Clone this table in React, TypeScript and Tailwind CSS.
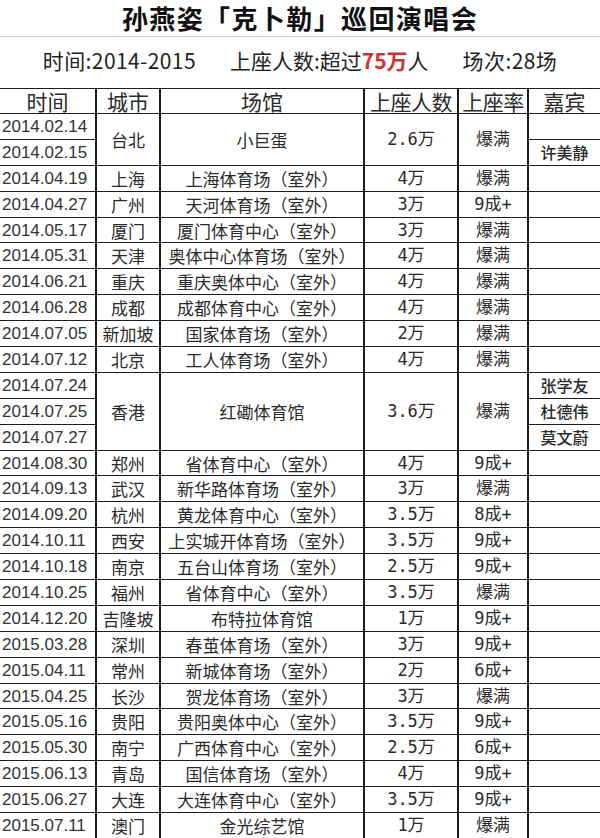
import React from "react";

type Row = {
  d: string;
  city?: string;
  venue?: string;
  num?: string;
  rate?: string;
  span?: number;
  guest?: string;
  guestOnly?: boolean;
};

const rows: Row[] = [
  { d: "2014.02.14", city: "台北", venue: "小巨蛋", num: "2.6万", rate: "爆满", span: 2, guest: "" },
  { d: "2014.02.15", guestOnly: true, guest: "许美静" },
  { d: "2014.04.19", city: "上海", venue: "上海体育场（室外）", num: "4万", rate: "爆满", guest: "" },
  { d: "2014.04.27", city: "广州", venue: "天河体育场（室外）", num: "3万", rate: "9成+", guest: "" },
  { d: "2014.05.17", city: "厦门", venue: "厦门体育中心（室外）", num: "3万", rate: "爆满", guest: "" },
  { d: "2014.05.31", city: "天津", venue: "奥体中心体育场（室外）", num: "4万", rate: "爆满", guest: "" },
  { d: "2014.06.21", city: "重庆", venue: "重庆奥体中心（室外）", num: "4万", rate: "爆满", guest: "" },
  { d: "2014.06.28", city: "成都", venue: "成都体育中心（室外）", num: "4万", rate: "爆满", guest: "" },
  { d: "2014.07.05", city: "新加坡", venue: "国家体育场（室外）", num: "2万", rate: "爆满", guest: "" },
  { d: "2014.07.12", city: "北京", venue: "工人体育场（室外）", num: "4万", rate: "爆满", guest: "" },
  { d: "2014.07.24", city: "香港", venue: "红磡体育馆", num: "3.6万", rate: "爆满", span: 3, guest: "张学友" },
  { d: "2014.07.25", guestOnly: true, guest: "杜德伟" },
  { d: "2014.07.27", guestOnly: true, guest: "莫文蔚" },
  { d: "2014.08.30", city: "郑州", venue: "省体育中心（室外）", num: "4万", rate: "9成+", guest: "" },
  { d: "2014.09.13", city: "武汉", venue: "新华路体育场（室外）", num: "3万", rate: "爆满", guest: "" },
  { d: "2014.09.20", city: "杭州", venue: "黄龙体育中心（室外）", num: "3.5万", rate: "8成+", guest: "" },
  { d: "2014.10.11", city: "西安", venue: "上实城开体育场（室外）", num: "3.5万", rate: "9成+", guest: "" },
  { d: "2014.10.18", city: "南京", venue: "五台山体育场（室外）", num: "2.5万", rate: "9成+", guest: "" },
  { d: "2014.10.25", city: "福州", venue: "省体育中心（室外）", num: "3.5万", rate: "爆满", guest: "" },
  { d: "2014.12.20", city: "吉隆坡", venue: "布特拉体育馆", num: "1万", rate: "9成+", guest: "" },
  { d: "2015.03.28", city: "深圳", venue: "春茧体育场（室外）", num: "3万", rate: "9成+", guest: "" },
  { d: "2015.04.11", city: "常州", venue: "新城体育场（室外）", num: "2万", rate: "6成+", guest: "" },
  { d: "2015.04.25", city: "长沙", venue: "贺龙体育场（室外）", num: "3万", rate: "爆满", guest: "" },
  { d: "2015.05.16", city: "贵阳", venue: "贵阳奥体中心（室外）", num: "3.5万", rate: "9成+", guest: "" },
  { d: "2015.05.30", city: "南宁", venue: "广西体育中心（室外）", num: "2.5万", rate: "6成+", guest: "" },
  { d: "2015.06.13", city: "青岛", venue: "国信体育场（室外）", num: "4万", rate: "9成+", guest: "" },
  { d: "2015.06.27", city: "大连", venue: "大连体育中心（室外）", num: "3.5万", rate: "9成+", guest: "" },
  { d: "2015.07.11", city: "澳门", venue: "金光综艺馆", num: "1万", rate: "爆满", guest: "" },
];

const cjk = "font-['Noto_Sans_CJK_SC',sans-serif]";
const mono = "font-['DejaVu_Sans_Mono','Noto_Sans_CJK_SC',monospace]";
const cell =
  "flex items-center justify-center border-b border-[#1c1c1c] text-[#2a2a2a] leading-none whitespace-nowrap";
const vr = "border-r-2 border-r-[#1c1c1c]";

function spanClass(n?: number) {
  if (n === 2) return "row-span-2";
  if (n === 3) return "row-span-3";
  return "";
}

export default function App() {
  return (
    <div className={`w-[600px] h-[838px] bg-white overflow-hidden ${cjk}`}>
      <div className="h-[37px] flex items-center justify-center border-b border-[#cfcfcf]">
        <span className="text-[26px] font-bold tracking-[1.4px] text-[#111] leading-none">
          孙燕姿「克卜勒」巡回演唱会
        </span>
      </div>
      <div className="h-[51px] flex items-center justify-center gap-[34px] text-[21px] text-[#222] leading-none pb-[4px]">
        <span className="tracking-[0.4px]">时间:2014-2015</span>
        <span>
          上座人数:超过<span className="font-bold text-[#d2302a]">75万</span>人
        </span>
        <span className="tracking-[0.4px]">场次:28场</span>
      </div>
      <div className="grid grid-cols-[97px_64px_204px_94px_70px_71px] grid-rows-[25px_repeat(28,25.9px)] border-t border-[#1c1c1c]">
        <div className={`${cell} ${vr} text-[21px]`}>时间</div>
        <div className={`${cell} ${vr} text-[21px]`}>城市</div>
        <div className={`${cell} ${vr} text-[21px]`}>场馆</div>
        <div className={`${cell} ${vr} text-[21px] tracking-[-0.5px]`}>上座人数</div>
        <div className={`${cell} ${vr} text-[21px] tracking-[-0.5px]`}>上座率</div>
        <div className={`${cell} text-[21px]`}>嘉宾</div>
        {rows.map((r, i) => (
          <React.Fragment key={i}>
            <div
              className={`${cell} ${vr} !justify-start pl-[2px] text-[17px] font-['Liberation_Sans',sans-serif] text-[#333]`}
            >
              {r.d}
            </div>
            {!r.guestOnly && (
              <>
                <div className={`${cell} ${vr} ${spanClass(r.span)} text-[17px]`}>{r.city}</div>
                <div className={`${cell} ${vr} ${spanClass(r.span)} text-[17px]`}>{r.venue}</div>
                <div className={`${cell} ${vr} ${spanClass(r.span)} text-[17px] ${mono}`}>{r.num}</div>
                <div className={`${cell} ${vr} ${spanClass(r.span)} text-[17px] ${mono}`}>{r.rate}</div>
              </>
            )}
            <div className={`${cell} text-[16px] font-medium`}>{r.guest}</div>
          </React.Fragment>
        ))}
      </div>
    </div>
  );
}
